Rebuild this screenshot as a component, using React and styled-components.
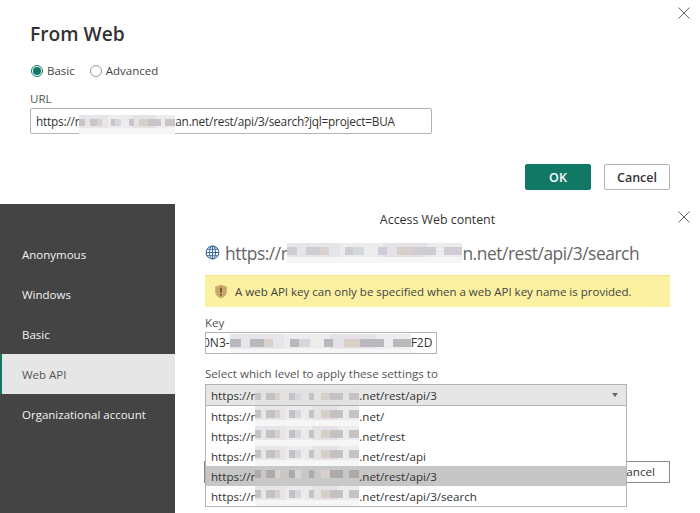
import React from "react";
import styled, { createGlobalStyle } from "styled-components";

const GlobalStyle = createGlobalStyle`
  html, body {
    margin: 0;
    padding: 0;
    background: #fff;
    font-family: "Open Sans", "Noto Sans", sans-serif;
    color: #333;
  }
`;

const Page = styled.div`
  width: 700px;
  height: 513px;
  overflow: hidden;
  display: flex;
  flex-direction: column;
`;

const FromWebDialog = styled.section`
  position: relative;
  height: 204px;
  box-sizing: border-box;
  padding: 20px 30px 0;
  display: flex;
  flex-direction: column;
`;

const CloseButton = styled.button`
  position: absolute;
  right: 9px;
  top: ${(props) => props.top}px;
  width: 14px;
  height: 14px;
  padding: 0;
  border: 0;
  background: none;
  display: flex;
  color: #666;
`;

const Title = styled.h1`
  margin: 0;
  font-size: 19.2px;
  line-height: 27px;
  font-weight: 600;
  color: #333;
`;

const RadioRow = styled.div`
  display: flex;
  align-items: center;
  margin-top: 16px;
  height: 14px;
`;

const RadioOption = styled.label`
  display: flex;
  align-items: center;
  gap: 4px;
  margin-right: 14px;
  margin-left: 1px;
  font-size: 11.5px;
  color: #444;
`;

const RadioDot = styled.span`
  box-sizing: border-box;
  width: 12px;
  height: 12px;
  margin-top: 1px;
  border-radius: 50%;
  border: 1px solid ${(props) => (props.$on ? "#117865" : "#999")};
  display: flex;
  align-items: center;
  justify-content: center;
  &::after {
    content: "";
    display: ${(props) => (props.$on ? "block" : "none")};
    width: 8px;
    height: 8px;
    border-radius: 50%;
    background: #117865;
  }
`;

const FieldLabel = styled.div`
  font-size: 11.6px;
  line-height: 16px;
  color: #555;
  margin-top: ${(props) => props.$top}px;
`;

const UrlInput = styled.div`
  box-sizing: border-box;
  width: 402px;
  height: 26px;
  margin-top: 1px;
  padding-left: 5px;
  border: 1px solid #b3b3b3;
  border-radius: 2px;
  font-size: 11.8px;
  letter-spacing: -0.2px;
  line-height: 24px;
  color: #333;
  white-space: nowrap;
  display: flex;
  align-items: flex-start;
`;

// pixelated patch that hides part of a host name
const Smudge = styled.span`
  flex: none;
  display: block;
  width: ${(props) => props.$w}px;
  height: ${(props) => props.$h}px;
  margin-top: ${(props) => props.$top || 0}px;
  background:
    linear-gradient(90deg, ${(props) => props.$tint} 0 6%, transparent 6% 11%, ${(props) => props.$tint} 11% 19%, #d9d2cc 19% 24%, transparent 24% 33%, ${(props) => props.$tint} 33% 38%, #d3d8de 38% 44%, transparent 44% 52%, ${(props) => props.$tint} 52% 57%, transparent 57% 63%, #d8cfc9 63% 72%, ${(props) => props.$tint} 72% 85%, transparent 85% 90%, ${(props) => props.$tint} 90% 100%) 0 ${(props) => Math.round(props.$h * 0.22)}px / 100% ${(props) => Math.round(props.$h * 0.38)}px no-repeat,
    linear-gradient(90deg, ${(props) => props.$shade || "#e6e6ea"} 0 30%, ${(props) => props.$shade || "#ececec"} 30% 55%, ${(props) => props.$shade || "#e4e2e6"} 55% 80%, ${(props) => props.$shade || "#ececee"} 80%) 0 0 / 100% 70% no-repeat,
    ${(props) => props.$shade || "#f6f6f7"};
  filter: blur(0.7px);
`;

const FooterButtons = styled.div`
  display: flex;
  justify-content: flex-end;
  gap: 13px;
  margin-top: 30px;
`;

const DialogButton = styled.button`
  box-sizing: border-box;
  width: 66px;
  height: 26px;
  padding: 0;
  border-radius: 2px;
  border: 1px solid ${(props) => (props.$primary ? "#117865" : "#b3b3b3")};
  background: ${(props) => (props.$primary ? "#117865" : "#fff")};
  color: ${(props) => (props.$primary ? "#fff" : "#333")};
  font-family: inherit;
  font-size: 12.5px;
  font-weight: 600;
`;

const AccessDialog = styled.section`
  position: relative;
  flex: 1;
  display: flex;
  min-height: 0;
`;

const Sidebar = styled.nav`
  width: 175px;
  flex: none;
  background: #444;
  padding-top: 30px;
  box-sizing: border-box;
`;

const NavItem = styled.div`
  height: 40px;
  box-sizing: border-box;
  display: flex;
  align-items: center;
  font-size: 11.5px;
  color: ${(props) => (props.$active ? "#555" : "#f2f2f2")};
  background: ${(props) => (props.$active ? "#e6e6e6" : "transparent")};
  border-left: ${(props) => (props.$active ? "2px solid #117865" : "0")};
  padding-left: ${(props) => (props.$active ? 20 : 22)}px;
`;

const Content = styled.div`
  flex: 1;
  min-width: 0;
  box-sizing: border-box;
  padding: 8px 30px 0;
  display: flex;
  flex-direction: column;
`;

const DialogHeading = styled.div`
  font-size: 12.4px;
  line-height: 16px;
  color: #333;
  text-align: center;
`;

const UrlHeading = styled.div`
  display: flex;
  align-items: flex-start;
  height: 28px;
  margin-top: 11px;
  font-size: 17.4px;
  letter-spacing: -0.45px;
  line-height: 28px;
  color: #666;
  white-space: nowrap;
`;

const Globe = styled.svg`
  width: 15px;
  height: 15px;
  margin: 6px 5px 0 0;
  flex: none;
`;

const WarningBar = styled.div`
  height: 32px;
  margin-top: 8px;
  display: flex;
  align-items: center;
  gap: 7px;
  padding-left: 9px;
  background: #fbf1a0;
  border-top: 1px solid #efe48c;
  box-sizing: border-box;
  font-size: 11.5px;
  color: #444;
  white-space: nowrap;
`;

const KeyInput = styled.div`
  box-sizing: border-box;
  width: 232px;
  height: 22px;
  margin-top: 1px;
  border: 1px solid #b3b3b3;
  overflow: hidden;
  display: flex;
  align-items: flex-start;
  font-size: 12px;
  line-height: 20px;
  color: #333;
  white-space: nowrap;
`;

const KeyStart = styled.span`
  margin-left: -3px;
`;

const SelectWrap = styled.div`
  position: relative;
  margin-top: 2px;
  width: 422px;
`;

const SelectBox = styled.div`
  box-sizing: border-box;
  height: 22px;
  border: 1px solid #b3b3b3;
  background: #e6e6e6;
  padding-left: 5px;
  display: flex;
  align-items: flex-start;
  font-size: 11.6px;
  line-height: 21px;
  color: #333;
  white-space: nowrap;
`;

const Caret = styled.span`
  position: absolute;
  right: 9px;
  top: 9px;
  width: 0;
  height: 0;
  border-left: 3px solid transparent;
  border-right: 3px solid transparent;
  border-top: 4px solid #666;
`;

const DropList = styled.div`
  position: absolute;
  left: 0;
  right: 0;
  top: 21px;
  box-sizing: border-box;
  background: #fff;
  border: 1px solid #b3b3b3;
  z-index: 2;
`;

const DropRow = styled.div`
  height: 20px;
  padding-left: 5px;
  display: flex;
  align-items: flex-start;
  font-size: 11.6px;
  line-height: 21px;
  color: #333;
  white-space: nowrap;
  background: ${(props) => (props.$selected ? "#c6c6c6" : "transparent")};
`;

const HiddenFooter = styled.div`
  display: flex;
  justify-content: space-between;
  margin-top: 55px;
  margin-left: -1px;
`;

const BehindButton = styled.div`
  box-sizing: border-box;
  width: 66px;
  height: 22px;
  border: 1px solid #888;
  font-size: 11.6px;
  line-height: 20px;
  color: #333;
  text-align: center;
`;

const CloseIcon = () => (
  <svg viewBox="0 0 14 14" width="14" height="14" fill="none" stroke="currentColor" strokeWidth="1">
    <path d="M1.5 1.5l11 11M12.5 1.5l-11 11" />
  </svg>
);

const levels = [".net/", ".net/rest", ".net/rest/api", ".net/rest/api/3", ".net/rest/api/3/search"];

const App = () => (
  <Page>
    <GlobalStyle />
    <FromWebDialog>
      <CloseButton top={6}><CloseIcon /></CloseButton>
      <Title>From Web</Title>
      <RadioRow>
        <RadioOption><RadioDot $on />Basic</RadioOption>
        <RadioOption><RadioDot />Advanced</RadioOption>
      </RadioRow>
      <FieldLabel $top={14}>URL</FieldLabel>
      <UrlInput>
        https://r
        <Smudge $w={96} $h={19} $top={6} $tint="#c9c4c6" />
        an.net/rest/api/3/search?jql=project=BUA
      </UrlInput>
      <FooterButtons>
        <DialogButton $primary>OK</DialogButton>
        <DialogButton>Cancel</DialogButton>
      </FooterButtons>
    </FromWebDialog>

    <AccessDialog>
      <CloseButton top={6}><CloseIcon /></CloseButton>
      <Sidebar>
        <NavItem>Anonymous</NavItem>
        <NavItem>Windows</NavItem>
        <NavItem>Basic</NavItem>
        <NavItem $active>Web API</NavItem>
        <NavItem>Organizational account</NavItem>
      </Sidebar>
      <Content>
        <DialogHeading>Access Web content</DialogHeading>
        <UrlHeading>
          <Globe viewBox="0 0 16 16" fill="none" stroke="#3c6a9e" strokeWidth="1.1">
            <circle cx="8" cy="8" r="6.8" />
            <ellipse cx="8" cy="8" rx="3.2" ry="6.8" />
            <path d="M1.2 8h13.6M2.2 4.6h11.6M2.2 11.4h11.6M8 1.2v13.6" />
          </Globe>
          https://r
          <Smudge $w={175} $h={20} $top={4} $tint="#cfccd4" />
          n.net/rest/api/3/search
        </UrlHeading>
        <WarningBar>
          <svg width="14" height="15" viewBox="0 0 14 15">
            <path d="M7 .8l5.8 2v4.6c0 3.300-2.500 5.600-5.800 6.800C3.700 13 1.200 10.700 1.200 7.400V2.800z" fill="#c9a66b" />
            <path d="M6.200 3.800h1.600v5H6.200zM6.200 9.900h1.600v1.600H6.200z" fill="#5a4526" />
          </svg>
          A web API key can only be specified when a web API key name is provided.
        </WarningBar>
        <FieldLabel $top={8}>Key</FieldLabel>
        <KeyInput>
          <KeyStart>0N3-</KeyStart>
          <Smudge $w={181} $h={21} $top={1} $tint="#b9b9bd" />
          F2D
        </KeyInput>
        <FieldLabel $top={12}>Select which level to apply these settings to</FieldLabel>
        <SelectWrap>
          <SelectBox>
            https://r
            <Smudge $w={104} $h={19} $top={4} $shade="#e2e2e2" $tint="#c4c2c2" />
            .net/rest/api/3
          </SelectBox>
          <Caret />
          <DropList>
            {levels.map((level, i) => (
              <DropRow key={level} $selected={i === 3}>
                https://r
                <Smudge $w={104} $h={20} $shade={i === 3 ? "#c8c8c8" : undefined} $tint={i === 3 ? "#aeaaaa" : "#c4c2c2"} />
                {level}
              </DropRow>
            ))}
          </DropList>
        </SelectWrap>
        <HiddenFooter>
          <BehindButton>OK</BehindButton>
          <BehindButton>Cancel</BehindButton>
        </HiddenFooter>
      </Content>
    </AccessDialog>
  </Page>
);

export default App;
